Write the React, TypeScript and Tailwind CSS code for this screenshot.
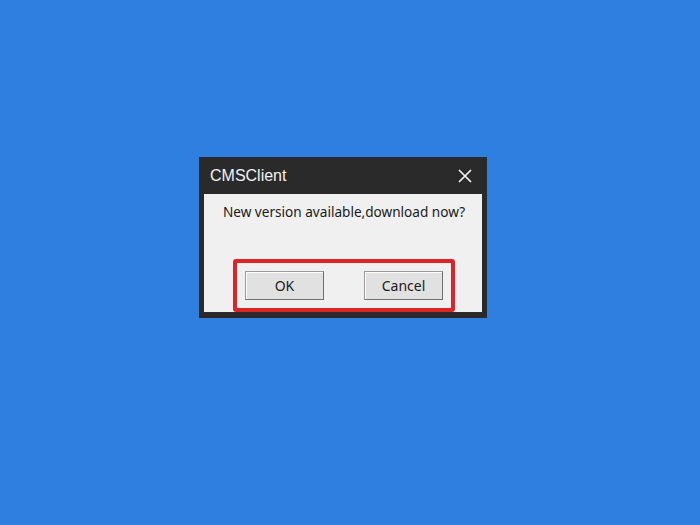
import React from 'react';

const font = { fontFamily: '"Noto Sans", "Liberation Sans", sans-serif' };

const DialogButton: React.FC<{ label: string }> = ({ label }) => (
  <button className="w-[79px] h-[29px] bg-[#e1e1e1] border border-[#9a9a9a] border-b-[#6f6f6f] border-r-[#6f6f6f] shadow-[inset_1px_1px_0_#fdfdfd] text-[14px] text-[#1a1a1a] leading-none">
    {label}
  </button>
);

const App: React.FC = () => {
  return (
    <div className="w-[700px] h-[525px] bg-[#2e7fe0] pt-[157px] pl-[199px]" style={font}>
      <div className="w-[288px] bg-[#2a2a2a] px-[5px] pb-[6px]">
        {/* title bar */}
        <div className="h-[37px] flex items-center justify-between pl-[6px] pr-[10px]">
          <span className="text-[16px] text-[#f2f2f2] font-['Liberation_Sans',sans-serif]">CMSClient</span>
          <svg width="14" height="14" viewBox="0 0 14 14" className="text-[#f4f4f4]">
            <path d="M1 1 L13 13 M13 1 L1 13" stroke="currentColor" strokeWidth="1.7" />
          </svg>
        </div>

        {/* body */}
        <div className="bg-[#f0f0f0] pt-[8px] flex flex-col">
          <p className="text-center text-[13.6px] text-[#1a1a1a] leading-[20px] pl-[2px]">
            New version available,download now?
          </p>
          <div className="mt-[37px] ml-[29px] mr-[27px] border-[4px] border-[#dd2426] rounded-[3px] flex justify-between px-[8px] py-[8px]">
            <DialogButton label="OK" />
            <DialogButton label="Cancel" />
          </div>
        </div>
      </div>
    </div>
  );
};

export default App;
